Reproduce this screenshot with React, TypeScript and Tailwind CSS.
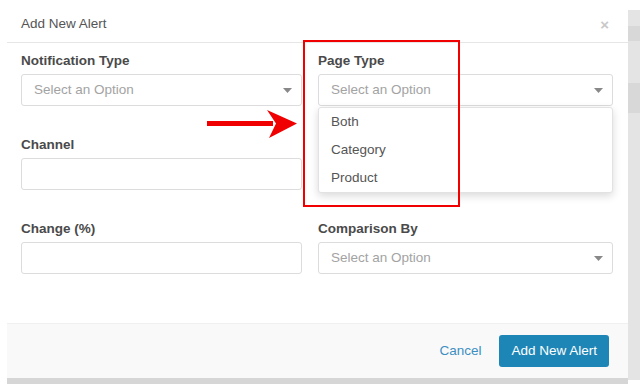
import React from 'react';

const Caret = () => (
  <svg width="9" height="5" viewBox="0 0 9 5" className="shrink-0">
    <path d="M0 0 L9 0 L4.5 5 Z" fill="#888888" />
  </svg>
);

const SelectBox = ({ placeholder = 'Select an Option' }: { placeholder?: string }) => (
  <div className="h-[32px] rounded-[3px] border border-[#dcdcdc] bg-white flex items-center justify-between pl-[12px] pr-[9px]">
    <span className="text-[13.5px] text-[#a3a3a3]">{placeholder}</span>
    <Caret />
  </div>
);

const TextBox = () => <div className="h-[32px] rounded-[3px] border border-[#dcdcdc] bg-white" />;

const Field = ({ label, children }: { label: string; children: React.ReactNode }) => (
  <div className="flex flex-col">
    <label className="h-[16px] leading-[16px] text-[13.5px] font-bold text-[#4a4a4a] mb-[5px]">{label}</label>
    {children}
  </div>
);

export default function App() {
  const options = ['Both', 'Category', 'Product'];

  return (
    <div
      className="relative w-[640px] h-[392px] bg-white overflow-hidden flex"
      style={{ fontFamily: '"Liberation Sans", Arial, sans-serif' }}
    >
      <div className="w-[7px] shrink-0" />
      <div className="flex flex-col w-[621px] shrink-0">
        <div className="h-[378px] bg-white flex flex-col">
          {/* header */}
          <div className="h-[43px] shrink-0 border-b border-[#e6e6e6] flex items-center justify-between pl-[14px] pr-[19px] pt-[6px]">
            <span className="text-[13.5px] text-[#555555]">Add New Alert</span>
            <span className="text-[15px] font-bold text-[#c8c8c8] leading-none">×</span>
          </div>

          {/* body */}
          <div className="flex-1 pt-[10px] pl-[14px]">
            <div className="grid grid-cols-[281px_295px] gap-x-[16px] gap-y-[31px]">
              <Field label="Notification Type">
                <SelectBox />
              </Field>
              <div className="relative">
                <Field label="Page Type">
                  <SelectBox />
                </Field>
                <div className="absolute left-0 right-0 top-[54px] z-10 bg-white border border-[#e2e2e2] rounded-[3px] shadow-[0_3px_8px_rgba(0,0,0,0.15)]">
                  {options.map((o) => (
                    <div key={o} className="h-[28px] flex items-center pl-[12px] text-[13.5px] text-[#555555]">
                      {o}
                    </div>
                  ))}
                </div>
              </div>
              <Field label="Channel">
                <TextBox />
              </Field>
              {/* field hidden under the open dropdown */}
              <div className="flex flex-col">
                <div className="h-[16px] mb-[5px]" />
                <TextBox />
              </div>
              <Field label="Change (%)">
                <TextBox />
              </Field>
              <Field label="Comparison By">
                <SelectBox />
              </Field>
            </div>
          </div>

          {/* footer */}
          <div className="h-[55px] shrink-0 bg-[#f9f9f9] border-t border-[#f0f0f0] flex items-center justify-end gap-[18px] pr-[19px]">
            <span className="text-[13.5px] text-[#3d8fc2]">Cancel</span>
            <button className="h-[32px] px-[12px] rounded-[3px] bg-[#1e86b6] text-white text-[13.5px]">
              Add New Alert
            </button>
          </div>
        </div>
        <div className="h-[6px] bg-[#d6d6d6]" />
      </div>
      <div className="w-[12px] shrink-0 flex flex-col pt-[10px]">
        <div className="h-[370px] bg-[#e4e4e4] flex flex-col">
          <div className="h-[15px] mt-[16px] bg-[#d8d8d8]" />
          <div className="h-[30px] mt-[42px] bg-[#d8d8d8]" />
        </div>
      </div>

      {/* annotation */}
      <div className="absolute left-[303px] top-[40px] w-[157px] h-[167px] border-2 border-[#f00000] z-20 pointer-events-none" />
      <svg className="absolute left-[205px] top-[108px] z-20" width="95" height="32" viewBox="0 0 95 32">
        <rect x="2" y="13" width="66" height="5" fill="#f00000" />
        <path d="M62 2 L92 15.5 L64 30 L71 15.5 Z" fill="#f00000" />
      </svg>
    </div>
  );
}
